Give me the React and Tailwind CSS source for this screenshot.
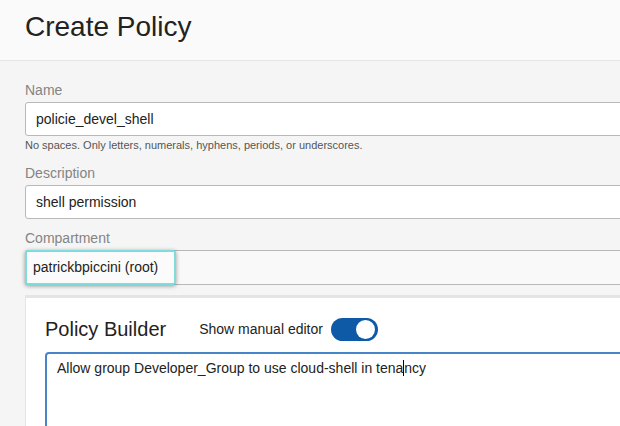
import React from "react";

export default function App() {
  const font = { fontFamily: '"Liberation Sans", Arial, sans-serif' };
  return (
    <div className="w-[620px] h-[426px] overflow-hidden bg-[#f5f5f5]" style={font}>
      <div className="w-[720px]">
        <div className="h-[61px] bg-[#fafafa] border-b border-[#e6e6e6] px-[25px] pt-[10px]">
          <h1 className="text-[28px] leading-[34px] text-[#222]">Create Policy</h1>
        </div>
        <div className="pl-[25px] pt-[21px] flex flex-col">
          <label className="text-[14px] leading-4 text-[#848484] mb-[4px]">Name</label>
          <div className="h-[34px] bg-white border border-[#b8b8b8] rounded-[3px] flex items-center pl-[10px] text-[14px] text-[#222]">
            policie_devel_shell
          </div>
          <p className="mt-[3px] text-[11px] leading-[13px] text-[#555]">
            No spaces. Only letters, numerals, hyphens, periods, or underscores.
          </p>
          <label className="mt-[13px] text-[14px] leading-4 text-[#848484] mb-[4px]">Description</label>
          <div className="h-[34px] bg-white border border-[#b8b8b8] rounded-[3px] flex items-center pl-[10px] text-[14px] text-[#222]">
            shell permission
          </div>
          <label className="mt-[11px] text-[14px] leading-4 text-[#848484] mb-[4px]">Compartment</label>
          <div className="h-[35px] bg-[#f9f9f9] border border-[#b8b8b8] rounded-[3px] flex items-stretch">
            <div className="-m-px w-[151px] border-2 border-[#7fdcdc] rounded-[3px] bg-[#fbfbfb] shadow-[0_1px_4px_rgba(0,0,0,0.4)] flex items-center pl-[6px] text-[14px] text-[#222]">
              patrickbpiccini (root)
            </div>
          </div>
          <div className="mt-[10px] bg-white border-t-[3px] border-l border-[#e4e4e4] pl-[19px] pt-[19px] h-[200px]">
            <div className="flex items-center h-[24px]">
              <span className="text-[20px] leading-6 text-[#222]">Policy Builder</span>
              <span className="ml-[33px] text-[14px] text-[#222]">Show manual editor</span>
              <div className="ml-[8px] w-[47px] h-[23px] rounded-full bg-[#0f5aa6] flex items-center justify-end pr-[3px]">
                <div className="w-[19px] h-[19px] rounded-full bg-white" />
              </div>
            </div>
            <div className="mt-[11px] h-[120px] border-2 border-[#4585c8] rounded-[4px] pl-[10px] pt-[6px] text-[14px] leading-4 text-[#222]">
              Allow group Developer_Group to use cloud-shell in tena
              <span className="inline-block w-px h-[16px] bg-black align-top" />
              ncy
            </div>
          </div>
        </div>
      </div>
    </div>
  );
}
